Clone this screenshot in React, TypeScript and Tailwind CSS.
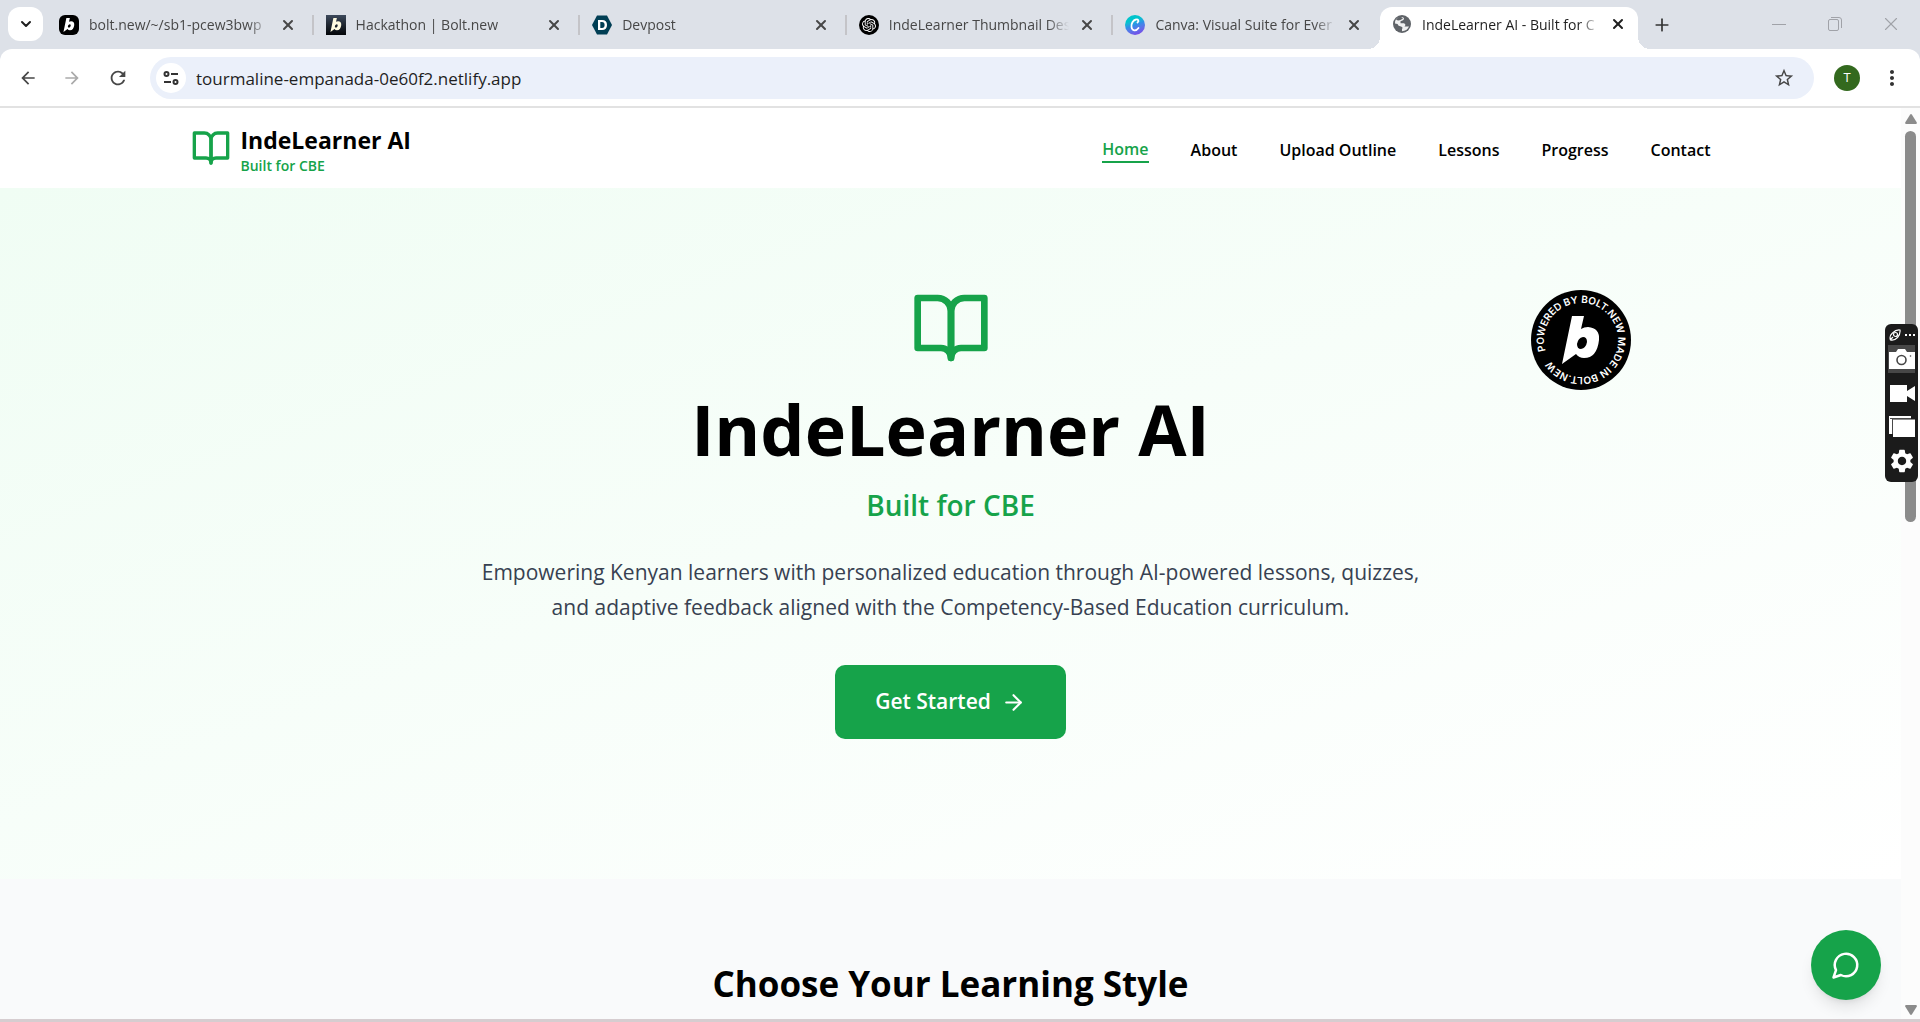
import type { ReactNode } from "react";
import { ArrowRight, ChevronDown, X, Plus } from "lucide-react";
import { MdArrowBack, MdArrowForward, MdRefresh, MdMoreVert, MdSettings, MdStarBorder } from "react-icons/md";
import { SiOpenai } from "react-icons/si";

function BoltLetter({ className }: { className: string }) {
  return (
    <svg viewBox="0 0 38 48" className={className} fill="currentColor" aria-hidden="true">
      <path
        fillRule="evenodd"
        d="M10 0H22L19 13Q22 11 26 11Q38 12 37 24Q35 42 22 42Q17 42 14 38L0 48ZM21 21Q16 22 15 28Q15 33 19 33Q24 32 25 26Q25 21 21 21Z"
      />
    </svg>
  );
}

function Book({ className }: { className: string }) {
  return (
    <svg viewBox="0 0 24 24" className={className} fill="none" stroke="currentColor" strokeWidth="2" strokeLinecap="round" strokeLinejoin="round" aria-hidden="true">
      <path d="M2 3h6a4 4 0 0 1 4 4v14a3 3 0 0 0-3-3H2z" />
      <path d="M22 3h-6a4 4 0 0 0-4 4v14a3 3 0 0 1 3-3h7z" />
    </svg>
  );
}

const tabs: { title: string; icon: ReactNode }[] = [
  {
    title: "bolt.new/~/sb1-pcew3bwp",
    icon: (
      <span className="flex size-5 items-center justify-center rounded-md bg-black text-white">
        <BoltLetter className="h-3.5 w-3" />
      </span>
    ),
  },
  {
    title: "Hackathon | Bolt.new",
    icon: (
      <span className="flex size-5 items-center justify-center bg-linear-to-b from-[#3d4a5c] to-[#05070a] text-[#fffbe0]">
        <BoltLetter className="h-3.5 w-3" />
      </span>
    ),
  },
  {
    title: "Devpost",
    icon: (
      <svg viewBox="0 0 20 20" className="size-5" aria-hidden="true">
        <path d="M5 .5h10L20 10l-5 9.5H5L0 10Z" fill="#003e54" />
        <path fillRule="evenodd" d="M6 5h4q5 0 5 5t-5 5H6ZM8.300 7v6H10q2.600 0 2.600-3T10 7Z" fill="#fff" />
      </svg>
    ),
  },
  {
    title: "IndeLearner Thumbnail Des",
    icon: (
      <span className="flex size-5 items-center justify-center rounded-full bg-black text-white">
        <SiOpenai className="size-3.5" />
      </span>
    ),
  },
  {
    title: "Canva: Visual Suite for Ever",
    icon: (
      <span className="flex size-5 items-center justify-center rounded-full bg-linear-160 from-[#00c4cc] from-30% via-[#2f8ee8] via-50% to-[#7d2ae8]">
        <svg viewBox="0 0 20 20" className="size-5" fill="none" stroke="#fff" strokeLinecap="round" aria-hidden="true">
          <path d="M12.500 7.500C14.500 6 13 4 11 4.500C8 5 6 9 6.500 12C7 16 11 16.500 13.500 13" strokeWidth="1.800" />
        </svg>
      </span>
    ),
  },
];

function TabBody({ title, icon }: { title: string; icon: ReactNode }) {
  return (
    <>
      {icon}
      <span className="ml-2.5 min-w-0 flex-1 overflow-hidden text-left whitespace-nowrap mask-r-from-88% mask-r-to-100%">
        {title}
      </span>
      <button aria-label={"Close " + title} className="ml-2 flex size-5 items-center justify-center">
        <X className="size-4" strokeWidth={3} />
      </button>
    </>
  );
}

function BrowserBar() {
  return (
    <div className="font-['Open_Sans','Noto_Sans',sans-serif]">
      <div className="flex h-[49px] items-end bg-[#dde1e8] text-[14px] text-[#474747]">
        <button aria-label="Search tabs" className="mb-2 ml-2 flex h-[34px] w-[35px] shrink-0 items-center justify-center rounded-xl bg-white text-[#1f1f1f]">
          <ChevronDown className="size-4" strokeWidth={3} />
        </button>
        <div className="ml-1 flex w-[1333px] min-w-0">
          {tabs.map((t, i) => (
            <div key={t.title} className="flex h-[49px] min-w-0 flex-1 items-center">
              <div className="flex h-full min-w-0 flex-1 items-center pr-3.5 pl-3">
                <TabBody title={t.title} icon={t.icon} />
              </div>
              <span className={i < 4 ? "h-5 w-0.5 bg-[#c4c4c8]" : "h-5 w-0.5"} />
            </div>
          ))}
        </div>
        <div className="relative flex h-[42px] w-[258px] shrink-0 items-center rounded-t-xl bg-white pr-2.5 pb-2 pl-3 text-[#1f1f1f]">
          <span className="absolute bottom-0 -left-3 size-3 bg-[radial-gradient(circle_at_0_0,#dde1e8_12px,#ffffff_12px)]" />
          <span className="absolute -right-3 bottom-0 size-3 bg-[radial-gradient(circle_at_100%_0,#dde1e8_12px,#ffffff_12px)]" />
          <TabBody
            title="IndeLearner AI - Built for C"
            icon={
              <svg viewBox="0 0 20 20" className="size-5" aria-hidden="true">
                <circle cx="10" cy="10" r="9" fill="#5f6368" />
                <path
                  d="M11 3.200Q13 4.500 11 6.200L8.500 7.200V9.200H12Q14.500 10.500 12.500 12.500H17Q15 17 10 17.200V15Q11.500 13.500 9 12.500Q6 12 5.500 10L3 9.500Q2.500 4.500 7.500 3Z"
                  fill="#fff"
                  fillOpacity=".9"
                />
                <path d="M4 5.500Q6 7 8.500 6L11 4.500Q9 2 6.500 3Z" fill="#5f6368" />
              </svg>
            }
          />
        </div>
        <button aria-label="New tab" className="mb-3 ml-3 flex size-6 items-center justify-center text-[#333]">
          <Plus className="size-5" />
        </button>
        <div className="mb-3 ml-auto flex shrink-0 gap-[30px] pr-4 text-[#a0a2a8]">
          <button aria-label="Minimize" className="flex size-[26px] items-center justify-center">
            <span className="h-px w-3.5 bg-current" />
          </button>
          <button aria-label="Restore" className="flex size-[26px] items-center justify-center">
            <svg viewBox="0 0 14 14" className="size-3.5" fill="none" stroke="currentColor" aria-hidden="true">
              <rect x=".5" y="2.500" width="10" height="11" rx="1.500" />
              <path d="M3 .5h8q2.500 0 2.500 2.500v8" />
            </svg>
          </button>
          <button aria-label="Close window" className="flex size-[26px] items-center justify-center">
            <X className="size-[22px]" strokeWidth={1.2} />
          </button>
        </div>
      </div>
      <div className="bg-[#dde1e8]">
        <div className="flex h-[59px] items-center rounded-t-xl border-b-2 border-[#e2e2e2] bg-white pr-4 pl-4">
          <button aria-label="Back" className="flex size-6 items-center justify-center text-[#474747]">
            <MdArrowBack className="size-5" />
          </button>
          <button aria-label="Forward" className="ml-5 flex size-6 items-center justify-center text-[#aaaaaa]">
            <MdArrowForward className="size-5" />
          </button>
          <button aria-label="Reload" className="ml-[22px] flex size-6 items-center justify-center text-[#474747]">
            <MdRefresh className="size-[22px]" />
          </button>
          <div className="ml-5 flex h-[42px] flex-1 items-center rounded-full bg-[#ebf0fa] pr-[18px] pl-1.5">
            <button aria-label="Site information" className="flex size-[30px] items-center justify-center rounded-full bg-white">
              <svg viewBox="0 0 16 16" className="size-4" fill="none" stroke="#333" strokeWidth="2" aria-hidden="true">
                <circle cx="3.500" cy="4" r="2" />
                <path d="M8 4h7M1 12h7" />
                <circle cx="12.500" cy="12" r="2" />
              </svg>
            </button>
            <input
              aria-label="Address"
              defaultValue="tourmaline-empanada-0e60f2.netlify.app"
              className="ml-2.5 min-w-0 flex-1 bg-transparent pt-0.5 text-[17px] text-[#1f1f1f] outline-none"
            />
            <button aria-label="Bookmark" className="flex size-6 items-center justify-center text-[#474747]">
              <MdStarBorder className="size-[22px]" />
            </button>
          </div>
          <button aria-label="Profile" className="ml-5 flex size-[26px] items-center justify-center rounded-full bg-[#33691e] text-[13px] text-white">
            T
          </button>
          <button aria-label="Menu" className="ml-5 flex size-6 items-center justify-center text-[#333]">
            <MdMoreVert className="size-6" />
          </button>
        </div>
      </div>
    </div>
  );
}

const links = ["About", "Upload Outline", "Lessons", "Progress", "Contact"];

function SiteHeader() {
  return (
    <header className="bg-white">
      <div className="mx-auto flex h-20 max-w-[1600px] items-center justify-between px-10">
        <a href="#home" className="flex items-center gap-2.5">
          <Book className="size-10 text-[#16a34a]" />
          <span className="flex flex-col pt-1.5">
            <span className="text-[23px] leading-[30px] font-bold text-black">IndeLearner AI</span>
            <span className="text-[14px] leading-[22px] font-semibold text-[#16a34a]">Built for CBE</span>
          </span>
        </a>
        <nav className="flex items-center gap-[42px] pt-1 text-[16px] leading-6 font-semibold text-black">
          <a href="#home" className="border-b-2 border-[#16a34a] text-[#16a34a]">
            Home
          </a>
          {links.map((l) => (
            <a key={l} href={"#" + l}>
              {l}
            </a>
          ))}
        </nav>
      </div>
    </header>
  );
}

function BoltBadge() {
  return (
    <a href="#bolt" aria-label="Powered by Bolt.new" className="absolute top-[102px] right-[270px] size-[100px]">
      <svg viewBox="0 0 100 100" className="size-full" aria-hidden="true">
        <defs>
          <path id="ring" d="M13 50a37 37 0 1 1 74 0a37 37 0 1 1 -74 0" />
        </defs>
        <circle cx="50" cy="50" r="50" fill="#000" />
        <g transform="rotate(-17 50 50)">
          <text fill="#fff" fontSize="10" fontFamily="Inter, sans-serif" fontWeight="600">
            <textPath href="#ring">POWERED BY BOLT.NEW MADE IN BOLT.NEW</textPath>
          </text>
        </g>
        <g transform="translate(31 26)">
          <path
            fill="#fff"
            fillRule="evenodd"
            d="M10 0H22L19 13Q22 11 26 11Q38 12 37 24Q35 42 22 42Q17 42 14 38L0 48ZM21 21Q16 22 15 28Q15 33 19 33Q24 32 25 26Q25 21 21 21Z"
          />
        </g>
      </svg>
    </a>
  );
}

function Hero() {
  return (
    <section className="relative flex flex-col items-center bg-linear-to-br from-[#f0fdf4] to-white pt-[100px] pb-[140px] text-center">
      <Book className="size-20 text-[#16a34a]" />
      <h1 className="mt-6 text-[70px] leading-[75px] font-bold text-black">IndeLearner AI</h1>
      <p className="mt-[18px] text-[28px] leading-10 font-semibold text-[#16a34a]">Built for CBE</p>
      <p className="mt-[30px] max-w-[960px] text-[21px] leading-[35px] text-[#374151]">
        Empowering Kenyan learners with personalized education through AI-powered lessons, quizzes, and adaptive
        feedback aligned with the Competency-Based Education curriculum.
      </p>
      <button className="mt-10 flex h-[74px] items-center gap-2.5 rounded-[10px] bg-[#16a34a] px-10 text-[21px] font-semibold text-white">
        Get Started
        <ArrowRight className="size-[25px]" />
      </button>
      <BoltBadge />
    </section>
  );
}

function ScrollBar() {
  return (
    <div className="flex w-[19px] shrink-0 flex-col items-center bg-[#fcfcfc] pt-1.5 pb-1" aria-hidden="true">
      <svg viewBox="0 0 12 10" className="h-2.5 w-3" fill="#8b8b8b">
        <path d="M5 .8Q6-.6 7 .8L11.800 8.500Q12 10 11 10H1Q0 10 .2 8.500Z" />
      </svg>
      <span className="mt-[7px] h-[391px] w-[11px] rounded-full bg-[#8b8b8b]" />
      <svg viewBox="0 0 12 10" className="mt-auto h-2.5 w-3 rotate-180" fill="#8b8b8b">
        <path d="M5 .8Q6-.6 7 .8L11.800 8.500Q12 10 11 10H1Q0 10 .2 8.500Z" />
      </svg>
    </div>
  );
}

function CaptureWidget() {
  return (
    <div className="absolute top-[216px] right-0.5 flex w-[33px] flex-col items-center rounded-md bg-[#1b1b1b] text-white">
      <div className="flex h-[21px] items-center gap-1">
        <svg viewBox="0 0 12 12" className="size-3" fill="none" stroke="currentColor" aria-hidden="true">
          <path d="M1.500 11Q0 7 3.500 4Q7 .5 11 1Q11.500 5 8.500 8.500Q5 12 1.500 11ZM1 11 4 8" strokeWidth="1.200" />
          <circle cx="6.500" cy="5.500" r="2" strokeWidth="1.200" />
        </svg>
        <span className="flex gap-0.5">
          <i className="size-0.5 bg-current" />
          <i className="size-0.5 bg-current" />
          <i className="size-0.5 bg-current" />
        </span>
      </div>
      <button aria-label="Screenshot" className="flex h-7 w-[27px] items-center justify-center bg-[#474747]">
        <svg viewBox="0 0 26 20" className="h-5 w-[26px]" aria-hidden="true">
          <path d="M0 3H7L9 0H16L18 3H26V20H0Z" fill="#fff" />
          <circle cx="12.500" cy="11" r="4.500" fill="#fff" stroke="#474747" strokeWidth="1.600" />
          <circle cx="21.500" cy="7" r=".8" fill="#474747" />
        </svg>
      </button>
      <button aria-label="Record video" className="mt-3 h-[17px]">
        <svg viewBox="0 0 26 17" className="h-[17px] w-[26px]" fill="currentColor" aria-hidden="true">
          <path d="M1 0H18V6L26 1V16L18 11V17H1Z" />
        </svg>
      </button>
      <button aria-label="Gallery" className="mt-3.5 h-[21px]">
        <svg viewBox="0 0 26 21" className="h-[21px] w-[26px]" aria-hidden="true">
          <path d="M0 0H22V3H4V18H0Z" fill="#fff" />
          <path d="M4 3.500H26V21H4Z" fill="#fff" />
          <path d="M1 2.500H22M3.500 3V18" stroke="#1b1b1b" strokeWidth=".8" fill="none" />
        </svg>
      </button>
      <button aria-label="Settings" className="mt-2.5 mb-[7px]">
        <MdSettings className="size-7" />
      </button>
    </div>
  );
}

export default function App() {
  return (
    <div className="flex h-screen flex-col overflow-hidden bg-white">
      <BrowserBar />
      <div className="relative flex min-h-0 flex-1 border-b-[3px] border-[#d6cdd0] font-['Open_Sans','Noto_Sans',sans-serif]">
        <main className="min-w-0 flex-1 overflow-hidden bg-[#f9fafb]">
          <SiteHeader />
          <Hero />
          <section className="pt-20 text-center">
            <h2 className="text-[35px] leading-[50px] font-bold text-black">Choose Your Learning Style</h2>
          </section>
        </main>
        <ScrollBar />
        <CaptureWidget />
        <button
          aria-label="Open chat"
          className="absolute right-[39px] bottom-[19px] flex size-[70px] items-center justify-center rounded-full bg-[#16a34a] text-white shadow-lg"
        >
          <svg viewBox="0 0 24 24" className="size-[30px]" fill="none" stroke="currentColor" strokeWidth="2" strokeLinecap="round" strokeLinejoin="round" aria-hidden="true">
            <path d="M7.900 20A9 9 0 1 0 4 16.100L2 22Z" />
          </svg>
        </button>
      </div>
    </div>
  );
}
